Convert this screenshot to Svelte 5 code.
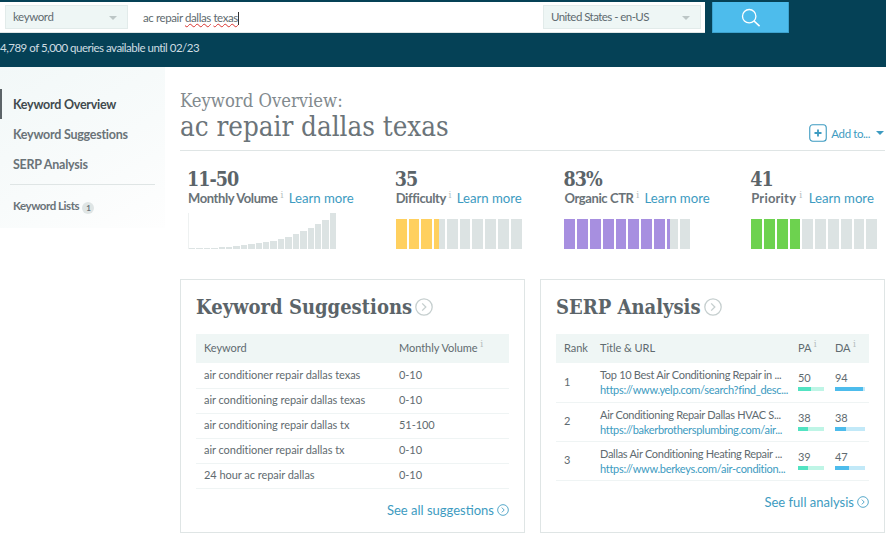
<script>
  const nav = ['Keyword Overview', 'Keyword Suggestions', 'SERP Analysis'];
  const volume = [1, 1, 1.5, 1.5, 2, 2, 3, 4, 5, 6, 7, 8, 10, 12, 15, 18, 21, 25, 29, 36];
  const metrics = [
    { value: '35', label: 'Difficulty', fill: 3.5, color: '#ffd05f', width: 169 },
    { value: '83%', label: 'Organic CTR', fill: 8.3, color: '#a78fe0', width: 187 },
    { value: '41', label: 'Priority', fill: 4, color: '#6dd24f', width: 134 }
  ];
  const suggestions = [
    ['air conditioner repair dallas texas', '0-10'],
    ['air conditioning repair dallas texas', '0-10'],
    ['air conditioning repair dallas tx', '51-100'],
    ['air conditioner repair dallas tx', '0-10'],
    ['24 hour ac repair dallas', '0-10']
  ];
  const serp = [
    { title: 'Top 10 Best Air Conditioning Repair in ...', url: 'https://www.yelp.com/search?find_desc...', pa: 50, da: 94 },
    { title: 'Air Conditioning Repair Dallas HVAC S...', url: 'https://bakerbrothersplumbing.com/air...', pa: 38, da: 38 },
    { title: 'Dallas Air Conditioning Heating Repair ...', url: 'https://www.berkeys.com/air-condition...', pa: 39, da: 47 }
  ];
</script>

<header>
  <div class="search-row">
    <div class="search-box">
      <div class="select kind">keyword<span class="caret"></span></div>
      <div class="query">ac repair <span class="typo">dallas</span> <span class="typo">texas</span><span class="cursor"></span></div>
      <div class="select locale">United States - en-US<span class="caret"></span></div>
    </div>
    <button aria-label="Search">
      <svg width="20" height="20" viewBox="0 0 20 20" fill="none" stroke="#fff">
        <circle cx="8.2" cy="8.2" r="6.7" stroke-width="1.3" />
        <path d="M13 13l5.6 5.2" stroke-width="1.6" />
      </svg>
    </button>
  </div>
  <p class="quota">4,789 of 5,000 queries available until 02/23</p>
</header>

<div class="page">
  <aside>
    <nav>
      {#each nav as item, i}
        <a class:active={i === 0} href="#top">{item}</a>
      {/each}
    </nav>
    <div class="lists">Keyword Lists <span class="count">1</span></div>
  </aside>

  <main>
    <div class="title">
      <div class="heading">
        <h2>Keyword Overview:</h2>
        <h1>ac repair dallas texas</h1>
      </div>
      <div class="add">
        <span class="plus">
          <svg width="18" height="18" viewBox="0 0 18 18">
            <rect x="0.75" y="0.75" width="16.5" height="16.5" rx="3" fill="none" stroke="#3d9bc1" stroke-width="1.1" />
            <path d="M9 5.5v7M5.5 9h7" stroke="#3d9bc1" stroke-width="1.8" />
          </svg>
        </span>
        Add to...
        <span class="caret blue"></span>
      </div>
    </div>

    <section class="metrics">
      <div class="metric first">
        <div class="value">11-50</div>
        <div class="label">Monthly Volume <sup>i</sup> <span class="learn">Learn more</span></div>
        <div class="chart">
          {#each volume as h}
            <span style="height: {h}px"></span>
          {/each}
        </div>
      </div>
      {#each metrics as m}
        <div class="metric" style="width: {m.width}px">
          <div class="value">{m.value}</div>
          <div class="label">{m.label} <sup>i</sup> <span class="learn">Learn more</span></div>
          <div class="segments">
            {#each Array(10) as _, i}
              <span>
                <i style="width: {Math.max(0, Math.min(1, m.fill - i)) * 100}%; background: {m.color}"></i>
              </span>
            {/each}
          </div>
        </div>
      {/each}
    </section>

    <section class="cards">
      <article>
        <h3>Keyword Suggestions <span class="go big"><svg viewBox="0 0 18 18"><circle cx="9" cy="9" r="8.2" /><path d="M7.2 5.4L10.8 9l-3.6 3.6" /></svg></span></h3>
        <table class="kw">
          <thead>
            <tr><th>Keyword</th><th class="vol">Monthly Volume <sup>i</sup></th></tr>
          </thead>
          <tbody>
            {#each suggestions as row}
              <tr><td>{row[0]}</td><td>{row[1]}</td></tr>
            {/each}
          </tbody>
        </table>
        <a class="more" href="#top">See all suggestions <span class="go"><svg viewBox="0 0 18 18"><circle cx="9" cy="9" r="8" /><path d="M7.2 5.4L10.8 9l-3.6 3.6" /></svg></span></a>
      </article>

      <article>
        <h3>SERP Analysis <span class="go big"><svg viewBox="0 0 18 18"><circle cx="9" cy="9" r="8.2" /><path d="M7.2 5.4L10.8 9l-3.6 3.6" /></svg></span></h3>
        <table class="rank">
          <thead>
            <tr><th class="r">Rank</th><th>Title &amp; URL</th><th class="pa">PA <sup>i</sup></th><th class="da">DA <sup>i</sup></th></tr>
          </thead>
          <tbody>
            {#each serp as row, i}
              <tr>
                <td>{i + 1}</td>
                <td>
                  <div class="line">{row.title}</div>
                  <div class="line url">{row.url}</div>
                </td>
                <td>
                  {row.pa}
                  <div class="meter pa-bar"><i style="width: {row.pa}%"></i></div>
                </td>
                <td>
                  {row.da}
                  <div class="meter da-bar"><i style="width: {row.da}%"></i></div>
                </td>
              </tr>
            {/each}
          </tbody>
        </table>
        <a class="more" href="#top">See full analysis <span class="go"><svg viewBox="0 0 18 18"><circle cx="9" cy="9" r="8" /><path d="M7.2 5.4L10.8 9l-3.6 3.6" /></svg></span></a>
      </article>
    </section>
  </main>
</div>

<style>
  :global(body) {
    font-family: Lato, "Open Sans", sans-serif;
    color: #5b6469;
    background: #fff;
    overflow: hidden;
  }
  header {
    height: 67px;
    box-sizing: border-box;
    padding-top: 2px;
    background: #054156;
  }
  .search-row {
    display: flex;
    gap: 7px;
  }
  .search-box {
    width: 705px;
    height: 31px;
    box-sizing: border-box;
    background: #fff;
    border-bottom: 1px solid #dfe5e5;
    display: flex;
    align-items: flex-start;
    padding: 3px 4px 0 5px;
  }
  .select {
    height: 24px;
    box-sizing: border-box;
    background: #eef6f5;
    border: 1px solid #e2ebea;
    font-size: 11.5px;
    line-height: 22px;
    padding-left: 7px;
    color: #5f6b70;
    letter-spacing: -0.4px;
    position: relative;
  }
  .kind { width: 123px; }
  .locale { width: 158px; letter-spacing: -0.55px; line-height: 21px; }
  .caret {
    position: absolute;
    right: 10px;
    top: 10px;
    border: 4px solid transparent;
    border-top: 4px solid #bcc6c6;
    border-bottom: 0;
  }
  .query {
    flex: 1;
    font-size: 11.5px;
    line-height: 25px;
    padding-left: 15px;
    color: #5f6b70;
    letter-spacing: -0.4px;
  }
  .typo {
    text-decoration: underline wavy #d9332f 1px;
    text-underline-offset: 1px;
  }
  .cursor {
    display: inline-block;
    width: 1px;
    height: 13px;
    background: #333;
    vertical-align: -3px;
  }
  button {
    width: 77px;
    height: 31px;
    padding: 0;
    background: #4dbcec;
    border: 1px solid #3ea3cf;
    border-top-color: #4dbcec;
    border-radius: 1px;
    display: flex;
    align-items: center;
    justify-content: center;
  }
  .quota {
    margin: 5px 0 0;
    font-size: 11.5px;
    line-height: 20px;
    color: #cfdde2;
    letter-spacing: -0.5px;
  }
  .page {
    display: flex;
  }
  aside {
    width: 165px;
    height: 161px;
    flex: none;
    box-sizing: border-box;
    padding: 22px 10px 0 0;
    background: linear-gradient(150deg, #f2f8f8 0%, #f8fbfb 55%, #fefefe 100%);
  }
  nav {
    display: flex;
    flex-direction: column;
    margin-bottom: 10px;
    padding-bottom: 6px;
    position: relative;
  }
  nav::after {
    content: '';
    position: absolute;
    left: 10px;
    right: 0;
    bottom: 0;
    height: 1px;
    background: #dfe5e5;
  }
  nav a {
    height: 30px;
    line-height: 32px;
    padding-left: 13px;
    font-size: 12.5px;
    font-weight: 700;
    color: #6a7378;
    letter-spacing: -0.25px;
    text-decoration: none;
  }
  nav a.active {
    color: #414a4e;
    border-left: 2px solid #5c6468;
    padding-left: 11px;
  }
  .lists {
    margin-left: 13px;
    font-size: 11.5px;
    font-weight: 700;
    line-height: 22px;
    color: #6a7378;
    letter-spacing: -0.45px;
  }
  .count {
    display: inline-block;
    width: 12px;
    height: 12px;
    margin-left: 1px;
    border-radius: 50%;
    background: #dfe5e5;
    font-size: 8px;
    line-height: 12px;
    text-align: center;
    vertical-align: -1px;
    letter-spacing: 0;
  }
  main {
    width: 705px;
    margin-left: 15px;
    flex: none;
  }
  .title {
    display: flex;
    justify-content: space-between;
    align-items: flex-end;
    height: 84px;
    box-sizing: border-box;
    border-bottom: 1px solid #dfe5e5;
  }
  .heading { margin-bottom: 11px; }
  h1, h2, h3, .value {
    font-family: "DejaVu Serif Condensed", "DejaVu Serif", "Liberation Serif", serif;
  }
  h1, h2, h3 {
    margin: 0;
  }
  h2 {
    font-size: 18.3px;
    font-weight: 400;
    line-height: 24px;
    color: #828a8e;
  }
  h1 {
    font-size: 27.5px;
    font-weight: 400;
    line-height: 26px;
    color: #6b7479;
  }
  .add {
    display: flex;
    align-items: center;
    gap: 4px;
    font-size: 11.5px;
    color: #3d9bc1;
    letter-spacing: -0.4px;
    margin-bottom: 8px;
    position: relative;
    padding-right: 15px;
  }
  .plus { height: 18px; }
  .caret.blue {
    top: 7px;
    right: 1px;
    border-top-color: #3d9bc1;
  }
  .metrics {
    display: flex;
    padding-left: 8px;
    height: 128px;
    box-sizing: border-box;
    padding-top: 16px;
  }
  .metric.first { width: 208px; }
  .value {
    font-size: 19.5px;
    font-weight: 700;
    line-height: 18px;
    margin: 4px 0 0 -1px;
    letter-spacing: -1px;
    color: #5b6469;
  }
  .label {
    font-size: 13px;
    font-weight: 700;
    line-height: 18px;
    white-space: nowrap;
    color: #6a7378;
    letter-spacing: -0.4px;
  }
  .metric:last-child .label { letter-spacing: 0.2px; }
  sup {
    font-size: 9px;
    color: #b5bdbd;
    line-height: 0;
    font-weight: 400;
    font-family: "DejaVu Serif", serif;
  }
  .learn {
    font-size: 13.2px;
    font-weight: 400;
    color: #3d9bc1;
    letter-spacing: 0;
    margin-left: 3px;
  }
  .chart {
    height: 36px;
    width: 147px;
    margin-top: 6px;
    display: flex;
    align-items: flex-end;
    gap: 1px;
    border-left: 1px solid #eef1f1;
  }
  .chart span {
    flex: 1;
    background: #dce3e3;
  }
  .segments {
    display: flex;
    gap: 2px;
    width: 126px;
    height: 30px;
    margin-top: 12px;
  }
  .segments span {
    flex: 1;
    background: #dce3e3;
  }
  .segments i {
    display: block;
    height: 100%;
  }
  .cards {
    display: flex;
    gap: 15px;
  }
  article {
    width: 345px;
    height: 254px;
    box-sizing: border-box;
    border: 1px solid #dfe5e5;
    padding: 13px 15px 0;
    position: relative;
  }
  h3 {
    font-size: 20px;
    line-height: 28px;
    font-weight: 700;
    color: #5b6469;
    display: flex;
    align-items: center;
    gap: 3px;
    margin-bottom: 13px;
    white-space: nowrap;
  }
  .go {
    display: inline-block;
    width: 12px;
    height: 12px;
  }
  .go svg {
    display: block;
    width: 100%;
    height: 100%;
    fill: none;
    stroke: #3d9bc1;
    stroke-width: 1.3;
  }
  .go.big {
    width: 18px;
    height: 18px;
  }
  .go.big svg { stroke: #c6cfcf; }
  table {
    width: 313px;
    border-collapse: collapse;
    table-layout: fixed;
    font-size: 11px;
    font-weight: 400;
    color: #5f6b70;
    letter-spacing: -0.05px;
  }
  thead tr {
    background: #eff6f5;
    height: 29px;
  }
  th {
    text-align: left;
    font-weight: 400;
    font-size: 11px;
    padding: 0 0 2px 8px;
  }
  td {
    padding: 0 0 0 8px;
    border-bottom: 1px solid #eff4f4;
  }
  .kw td { padding-bottom: 2px; }
  .kw th.vol { width: 110px; }
  .kw tbody tr { height: 25px; }
  .rank th.r { width: 28px; }
  .rank th.pa { width: 37px; padding-left: 0; }
  .rank th.da { width: 34px; padding-left: 0; }
  .rank tbody tr { height: 39px; }
  .rank td:first-child { padding-bottom: 2px; }
  .rank td:nth-child(2) {
    vertical-align: top;
    padding-top: 5px;
  }
  .rank td:nth-child(3), .rank td:nth-child(4) {
    padding-left: 0;
    vertical-align: top;
    padding-top: 9px;
    line-height: 12px;
  }
  .line {
    line-height: 14px;
    white-space: nowrap;
    letter-spacing: -0.3px;
  }
  .url { color: #3d9bc1; margin-top: 1px; }
  .meter {
    height: 4px;
    width: 26px;
    margin-top: 3px;
  }
  .pa-bar { background: #bff5e6; }
  .da-bar { background: #c2e9f8; width: 30px; }
  .meter i {
    display: block;
    height: 100%;
  }
  .pa-bar i { background: #52e3c2; }
  .da-bar i { background: #4dbcec; }
  .more {
    display: flex;
    justify-content: flex-end;
    align-items: center;
    gap: 3px;
    margin-top: 13px;
    font-size: 13px;
    color: #3d9bc1;
    text-decoration: none;
  }
</style>
